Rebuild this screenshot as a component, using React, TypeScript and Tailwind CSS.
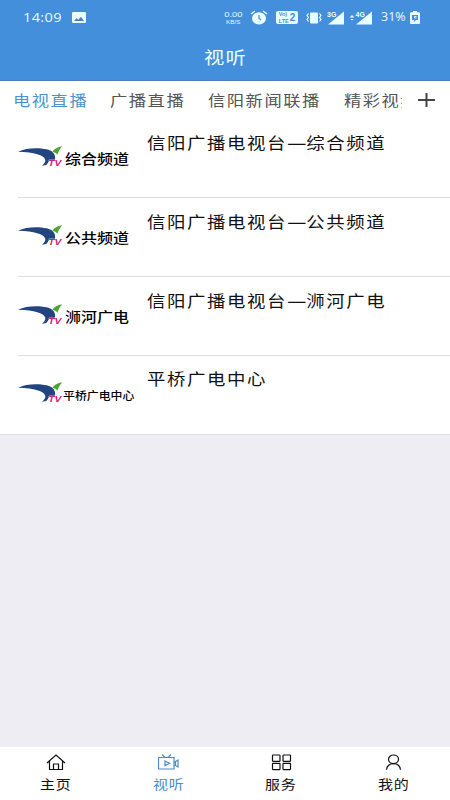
import clsx from 'clsx'

const tabs = [
  { label: '电视直播', width: 'w-[97px]' },
  { label: '广播直播', width: 'w-[98px]' },
  { label: '信阳新闻联播', width: 'w-[136px]' },
  { label: '精彩视频', width: 'w-[58px]' },
]

const channels = [
  { title: '信阳广播电视台—综合频道', short: '综合频道' },
  { title: '信阳广播电视台—公共频道', short: '公共频道' },
  { title: '信阳广播电视台—浉河广电', short: '浉河广电' },
  { title: '平桥广电中心', short: '平桥广电中心' },
]

function StatusBar() {
  return (
    <div className="flex h-[35px] items-center text-[#e6fbff]">
      <span className="ml-[23px] w-[49px] origin-left scale-x-[1.12] whitespace-nowrap font-['Open_Sans',sans-serif] text-[13px] font-normal leading-none tracking-[0.300px]">
        14:09
      </span>
      <svg className="h-[11px] w-[14px]" viewBox="0 0 14 11">
        <rect width="14" height="11" rx="1.3" fill="#eaffff" />
        <path d="M2 9l2.500-3 1.700 1.800L9 4.800 12 9z" fill="#4a84bd" />
      </svg>
      <div className="ml-[137px] flex w-[20px] flex-col items-center font-['Liberation_Sans',sans-serif] font-normal">
        <span className="scale-x-[1.25] text-[7.500px] leading-[9px]">0.00</span>
        <span className="scale-x-[1.15] text-[5.500px] leading-[6.500px]">KB/S</span>
      </div>
      <svg className="ml-[7px] h-[15px] w-[18px]" viewBox="0 0 18 15">
        <ellipse cx="9" cy="8.400" rx="7" ry="6.200" fill="#eaffff" />
        <path d="M1 4l4-3M17 4l-4-3" stroke="#eaffff" strokeWidth="1.3" />
        <path d="M9 5v3.500l2 1.500" fill="none" stroke="#458fda" strokeWidth="1.2" />
      </svg>
      <div className="ml-[8px] flex h-[13px] w-[22px] items-center justify-center rounded-[2px] bg-[#eaffff] font-['Liberation_Sans',sans-serif] font-bold text-[#458fda]">
        <div className="flex flex-col text-[5.500px] leading-[6.300px]">
          <span>Vo)</span>
          <span>LTE</span>
        </div>
        <span className="ml-[1px] text-[10px] leading-none">2</span>
      </div>
      <svg className="ml-[8px] h-[12px] w-[16px]" viewBox="0 0 16 12">
        <rect x="4" y="0.500" width="8" height="11" rx="0.800" fill="#eaffff" />
        <path d="M2.500 1.500L1 3.500l1.500 2L1 7.500l1.500 2M13.500 1.500L15 3.500l-1.500 2L15 7.500l-1.500 2" fill="none" stroke="#eaffff" strokeWidth="1.2" />
      </svg>
      <svg className="ml-[5px] h-[14px] w-[17px]" viewBox="0 0 17 14">
        <path d="M1 13.500L17 0.500v13z" fill="#eaffff" />
        <text x="0" y="5.800" fontSize="7" fontWeight="700" fontFamily="Liberation Sans, sans-serif" fill="#eaffff" stroke="#458fda" strokeWidth="1.5" paintOrder="stroke">3G</text>
      </svg>
      <svg className="ml-[5px] h-[14px] w-[24px]" viewBox="0 0 24 14">
        <path d="M7 13.500L23 0.500v13z" fill="#eaffff" />
        <path d="M0.500 6.500L3 4l2.500 2.500zM1.500 8h3L3 9.500z" fill="#eaffff" />
        <text x="6.500" y="5.800" fontSize="7" fontWeight="700" fontFamily="Liberation Sans, sans-serif" fill="#eaffff" stroke="#458fda" strokeWidth="1.5" paintOrder="stroke">4G</text>
      </svg>
      <span className="ml-[8px] w-[28px] whitespace-nowrap font-['Open_Sans',sans-serif] text-[12.500px] font-normal leading-none">
        31%
      </span>
      <svg className="ml-[1px] h-[13px] w-[10px]" viewBox="0 0 10 13">
        <path d="M3 0h4v1.300H9q1 0 1 1V12q0 1-1 1H1q-1 0-1-1V2.300q0-1 1-1h2z" fill="#eaffff" />
        <path d="M2 4h6v5H6L4 11V9H2z" fill="#458fda" />
        <path d="M6.500 5.500h-2v1.500h2" fill="none" stroke="#eaffff" strokeWidth="0.900" />
      </svg>
    </div>
  )
}

function Logo() {
  return (
    <svg className="h-[20.700px] w-[45.300px] shrink-0" viewBox="54 64 136 62">
      <path d="M54 81C78 69 115 68 140 74C160 79 168 90 165 106L149 107L143 116L139 121L126 123C133 117 137 111 136 105C131 91 104 83 54 81z" fill="#22457f" />
      <path d="M157 82C163 73 172 67 187 65C180 71 177 79 172 90C169 85 164 82 157 82z" fill="#4ba52e" />
      <text
        x="145"
        y="124"
        fontSize="28"
        fontWeight="700"
        fontStyle="italic"
        fontFamily="Liberation Sans, sans-serif"
        fill="#d51c70"
        stroke="#fff"
        strokeWidth="2"
        paintOrder="stroke"
        textLength="39"
        lengthAdjust="spacingAndGlyphs"
      >
        TV
      </text>
    </svg>
  )
}

// the em dash is stretched to fill its whole cell
function Title({ text }: { text: string }) {
  const [head, tail] = text.split('—')
  return (
    <span className="mt-[10.500px] h-[24px] origin-left scale-x-[1.15] whitespace-nowrap text-[16px] font-normal leading-[24px] tracking-[1.400px] text-[#111]">
      {head}
      {tail && <span className="mx-[1.100px] inline-block scale-x-[1.18] font-medium tracking-normal">—</span>}
      {tail}
    </span>
  )
}

function ChannelRow({ title, short, last }: { title: string; short: string; last: boolean }) {
  return (
    <div className={clsx('flex h-[78.800px] border-b border-[#dedee0]', last ? 'pl-[18px]' : 'ml-[18px]')}>
      <div className="flex w-[129px] pt-[26.500px]">
        <Logo />
        <span
          className={clsx(
            'origin-left whitespace-nowrap font-medium text-black',
            last
              ? 'mt-[2.500px] scale-x-[1.08] text-[11px] leading-[20px]'
              : 'ml-[2px] mt-[2px] scale-x-[1.14] text-[14px] leading-[20px]',
          )}
        >
          {short}
        </span>
      </div>
      <Title text={title} />
    </div>
  )
}

const navItems = [
  {
    label: '主页',
    icon: <path d="M1 9L10 1l9 8M3.500 7.500V15.500h13V7.500M7.500 15.500V10h5v5.500" />,
  },
  {
    label: '视听',
    icon: <path d="M0.500 3.500h15.500v11.500H0.500zM4 0.500L7 3.500M13 0.500l-3 3M7 7l4.500 2.200L7 11.500zM16 8h1.500M16 11.500h1.500M17.500 7.500l2.500-1.500v7l-2.500-1.500z" />,
  },
  {
    label: '服务',
    icon: (
      <>
        <rect x="1.500" y="1" width="7.500" height="6.300" rx="0.500" />
        <rect x="12" y="1" width="7.500" height="6.300" rx="0.500" />
        <rect x="1.500" y="9.300" width="7.500" height="6.300" rx="0.500" />
        <rect x="12" y="9.300" width="7.500" height="6.300" rx="0.500" />
      </>
    ),
  },
  {
    label: '我的',
    icon: (
      <>
        <ellipse cx="10.500" cy="5.300" rx="5" ry="4.300" />
        <path d="M3.500 15.800C4 11.500 7 9.600 10.500 9.600S17 11.500 17.500 15.800" />
      </>
    ),
  },
]

export default function App() {
  return (
    <div className="flex h-[800px] w-[450px] flex-col overflow-hidden bg-[#eeedf3] font-['Noto_Sans_CJK_SC',sans-serif]">
      <header className="h-[81px] shrink-0 border-b border-[#507fb5] bg-[#438fdc]">
        <StatusBar />
        <h1 className="flex h-[45px] items-center justify-center text-[17.500px] font-normal text-[#eaffff]">
          <span className="scale-x-[1.16] tracking-[1px]">视听</span>
        </h1>
      </header>

      <nav className="flex h-[38.600px] shrink-0 bg-white pl-[13px]">
        {tabs.map((tab, i) => (
          <div key={tab.label} className={clsx('h-[38px] overflow-hidden', tab.width)}>
            <span
              className={clsx(
                'block origin-left scale-x-[1.15] whitespace-nowrap text-[15px] leading-[37px] tracking-[1.350px]',
                i === 0 ? 'text-[#4a93cc]' : 'text-[#555]',
              )}
            >
              {tab.label}
            </span>
          </div>
        ))}
        <svg className="ml-[16px] mt-[12px] h-[14px] w-[17px]" viewBox="0 0 17 14">
          <path d="M0 7h17M8.500 0v14" stroke="#444" strokeWidth="2" />
        </svg>
      </nav>

      <main className="bg-white">
        {channels.map((c, i) => (
          <ChannelRow key={c.title} {...c} last={i === channels.length - 1} />
        ))}
      </main>

      <footer className="mt-auto grid h-[53px] shrink-0 grid-cols-4 bg-white">
        {navItems.map((item, i) => (
          <div
            key={item.label}
            className={clsx('flex flex-col items-center pt-[7px]', i === 1 ? 'text-[#4a8cc8]' : 'text-[#111]')}
          >
            <svg
              className="h-[17px] w-[21px]"
              viewBox="0 0 21 17"
              fill="none"
              stroke="currentColor"
              strokeWidth="1.2"
            >
              {item.icon}
            </svg>
            <span className="mt-[3px] scale-x-[1.15] text-[13px] leading-[20px] tracking-[0.800px]">{item.label}</span>
          </div>
        ))}
      </footer>
    </div>
  )
}
